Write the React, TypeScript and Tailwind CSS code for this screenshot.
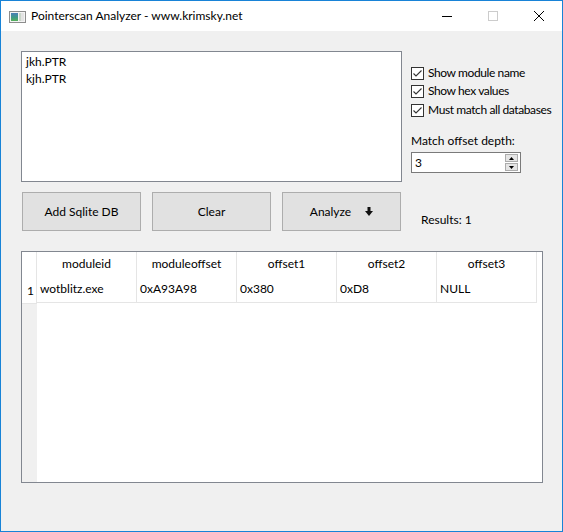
import React from 'react';

const font = { fontFamily: 'Lato, "Noto Sans", sans-serif' };

function WindowIcon() {
  return (
    <svg width="17" height="12" viewBox="0 0 17 12" className="shrink-0">
      <defs>
        <linearGradient id="pane" x1="0" y1="0" x2="0" y2="1">
          <stop offset="0" stopColor="#4a7fb8" />
          <stop offset="0.55" stopColor="#3f9a86" />
          <stop offset="1" stopColor="#57b05a" />
        </linearGradient>
      </defs>
      <rect x="0.5" y="0.5" width="16" height="11" fill="#f4f4f4" stroke="#8d8d8d" />
      <rect x="2" y="2" width="7" height="8" fill="url(#pane)" />
      <rect x="10" y="2" width="5" height="8" fill="#e3e3e3" />
      <rect x="10" y="2" width="2" height="8" fill="#c9d6c9" />
    </svg>
  );
}

function Check({ label }: { label: string }) {
  return (
    <div className="flex items-center h-[14px] whitespace-nowrap">
      <div className="w-[13px] h-[13px] shrink-0 border border-[#333] bg-white flex items-center justify-center">
        <svg width="11" height="11" viewBox="0 0 11 11">
          <path d="M1.5 5.5 L4 8 L9.5 2.5" fill="none" stroke="#333" strokeWidth="1.1" />
        </svg>
      </div>
      <span className="ml-[4px] text-[12px] text-black leading-none tracking-[-0.4px]">{label}</span>
    </div>
  );
}

function Button({ children }: { children: React.ReactNode }) {
  return (
    <div className="w-[119px] h-[39px] bg-[#e1e1e1] border border-[#adadad] flex items-center justify-center text-[12px] text-black">
      {children}
    </div>
  );
}

const columns = ['moduleid', 'moduleoffset', 'offset1', 'offset2', 'offset3'];
const row = ['wotblitz.exe', '0xA93A98', '0x380', '0xD8', 'NULL'];

export default function App() {
  return (
    <div style={font} className="w-[563px] h-[532px] border border-[#1883d7] flex flex-col bg-[#f0f0f0] overflow-hidden">
      {/* title bar */}
      <div className="h-[30px] bg-white flex items-center shrink-0">
        <div className="ml-[8px] mt-[1px]">
          <WindowIcon />
        </div>
        <span className="ml-[5px] text-[12px] text-black">Pointerscan Analyzer - www.krimsky.net</span>
        <div className="ml-auto flex items-center h-full">
          <div className="w-[46px] h-full flex items-center justify-center">
            <div className="w-[10px] h-[1px] bg-black" />
          </div>
          <div className="w-[46px] h-full flex items-center justify-center">
            <div className="w-[10px] h-[10px] border border-[#cccccc]" />
          </div>
          <div className="w-[46px] h-full flex items-center justify-center">
            <svg width="10" height="10" viewBox="0 0 10 10">
              <path d="M0 0 L10 10 M10 0 L0 10" stroke="#000" strokeWidth="1" />
            </svg>
          </div>
        </div>
      </div>

      {/* body */}
      <div className="flex-1 pl-[20px] pt-[20px]">
        <div className="flex">
          <div className="w-[381px] h-[131px] shrink-0 border border-[#828790] bg-white px-[4px] pt-[1px] text-[12px] text-black leading-[17px]">
            <div>jkh.PTR</div>
            <div>kjh.PTR</div>
          </div>
          <div className="ml-[9px] pt-[15px] flex flex-col shrink-0">
            <div className="flex flex-col gap-[4px]">
              <Check label="Show module name" />
              <Check label="Show hex values" />
              <div className="mt-[1px]">
                <Check label="Must match all databases" />
              </div>
            </div>
            <div className="mt-[18px] text-[12px] text-black leading-none">Match offset depth:</div>
            <div className="mt-[5px] w-[110px] h-[21px] border border-[#7a7a7a] bg-white flex items-center">
              <span className="ml-[3px] text-[12px] text-black">3</span>
              <div className="ml-auto mr-[2px] flex flex-col gap-[1px]">
                <div className="w-[13px] h-[8px] bg-[#e5e5e5] border border-[#acacac] flex items-center justify-center">
                  <svg width="5" height="3" viewBox="0 0 5 3"><path d="M0 3 L2.5 0 L5 3 Z" fill="#000" /></svg>
                </div>
                <div className="w-[13px] h-[8px] bg-[#e5e5e5] border border-[#acacac] flex items-center justify-center">
                  <svg width="5" height="3" viewBox="0 0 5 3"><path d="M0 0 L2.5 3 L5 0 Z" fill="#000" /></svg>
                </div>
              </div>
            </div>
          </div>
        </div>

        <div className="flex items-center mt-[10px] ml-[1px]">
          <Button>Add Sqlite DB</Button>
          <div className="ml-[11px]"><Button>Clear</Button></div>
          <div className="ml-[11px]">
            <Button>
              <span>Analyze</span>
              <svg width="8" height="9" viewBox="0 0 8 9" className="ml-[14px]">
                <path d="M2.5 0 H5.5 V4 H8 L4 9 L0 4 H2.5 Z" fill="#111" />
              </svg>
            </Button>
          </div>
          <span className="ml-[20px] mt-[16px] text-[12px] text-black">Results: 1</span>
        </div>

        {/* table */}
        <div className="mt-[20px] w-[522px] h-[232px] border border-[#828790] bg-white flex">
          <div className="w-[15px] flex flex-col">
            <div className="h-[26px] bg-white border-r border-[#e5e5e5]" />
            <div className="h-[26px] bg-white border-r border-b border-[#e5e5e5] flex items-center pl-[5px] text-[12px] text-black">1</div>
            <div className="flex-1 bg-[#f0f0f0]" />
          </div>
          <div className="flex flex-col">
            <div className="flex h-[24px] items-center">
              {columns.map((c) => (
                <div key={c} className="w-[100px] h-full border-r border-[#e5e5e5] flex items-center justify-center text-[12px] text-black">
                  {c}
                </div>
              ))}
            </div>
            <div className="flex h-[27px] border-b border-[#e5e5e5]">
              {row.map((v, i) => (
                <div key={i} className="w-[100px] border-r border-[#e5e5e5] flex items-center pl-[3px] text-[12px] text-black">
                  {v}
                </div>
              ))}
            </div>
          </div>
        </div>
      </div>
    </div>
  );
}
